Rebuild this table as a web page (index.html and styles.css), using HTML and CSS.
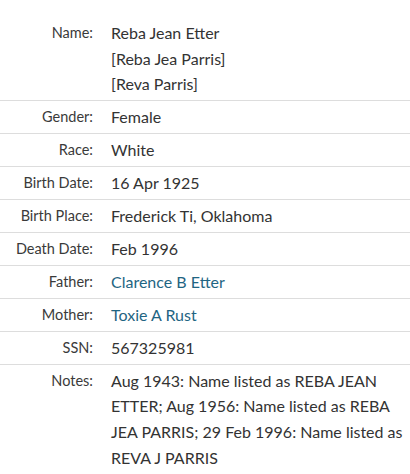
FILE: index.html
```html
<!DOCTYPE html>
<html>
<head>
<meta charset="utf-8">
<link rel="stylesheet" href="styles.css">
</head>
<body>
<div class="record">
  <div class="row">
    <div class="label">Name:</div>
    <div class="value">Reba Jean Etter<br>[Reba Jea Parris]<br>[Reva Parris]</div>
  </div>
  <div class="row">
    <div class="label">Gender:</div>
    <div class="value">Female</div>
  </div>
  <div class="row">
    <div class="label">Race:</div>
    <div class="value">White</div>
  </div>
  <div class="row">
    <div class="label">Birth Date:</div>
    <div class="value">16 Apr 1925</div>
  </div>
  <div class="row">
    <div class="label">Birth Place:</div>
    <div class="value">Frederick Ti, Oklahoma</div>
  </div>
  <div class="row">
    <div class="label">Death Date:</div>
    <div class="value">Feb 1996</div>
  </div>
  <div class="row">
    <div class="label">Father:</div>
    <div class="value"><a class="link" href="#">Clarence B Etter</a></div>
  </div>
  <div class="row">
    <div class="label">Mother:</div>
    <div class="value"><a class="link" href="#">Toxie A Rust</a></div>
  </div>
  <div class="row">
    <div class="label">SSN:</div>
    <div class="value">567325981</div>
  </div>
  <div class="row last">
    <div class="label">Notes:</div>
    <div class="value">Aug 1943: Name listed as REBA JEAN ETTER; Aug 1956: Name listed as REBA JEA PARRIS; 29 Feb 1996: Name listed as REVA J PARRIS</div>
  </div>
</div>
</body>
</html>
```

FILE: styles.css
```css
html, body {
  margin: 0;
  padding: 0;
  background: #fff;
}
body {
  font-family: Lato, "Noto Sans", sans-serif;
  color: #333;
}
.record {
  display: flex;
  flex-direction: column;
  padding-top: 16.8px;
}
.row {
  display: flex;
  gap: 18px;
  border-bottom: 1px solid #ddd;
  padding: 3.2px 0;
}
.row.last {
  border-bottom: none;
}
.label {
  flex: 0 0 93px;
  text-align: right;
  font-size: 14.5px;
  line-height: 25.6px;
  color: #3a3a3a;
  white-space: nowrap;
}
.value {
  flex: 1 1 auto;
  min-width: 0;
  padding-right: 6px;
  font-size: 16px;
  line-height: 25.6px;
  color: #333;
}
.link {
  color: #1f6583;
  text-decoration: none;
}
```
